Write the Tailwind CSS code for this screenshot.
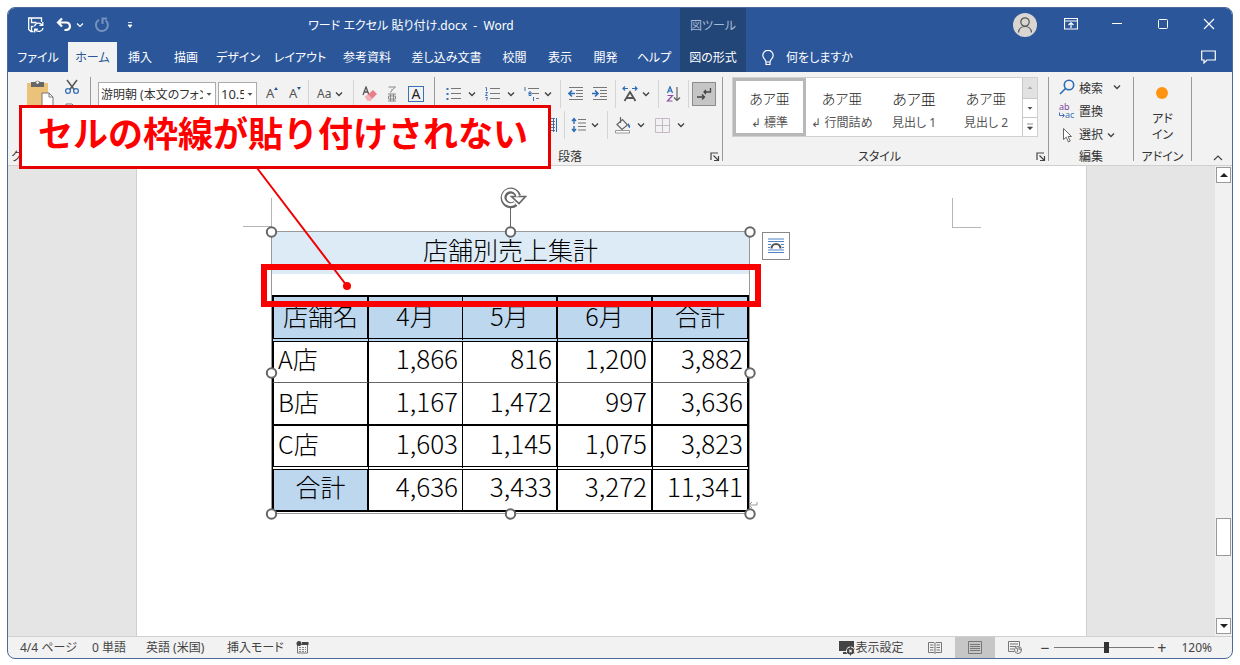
<!DOCTYPE html>
<html lang="ja">
<head>
<meta charset="utf-8">
<meta name="viewport" content="width=device-width, initial-scale=1">
<title>ワード エクセル 貼り付け.docx - Word</title>
<script src="https://cdn.jsdelivr.net/npm/@tailwindcss/browser@4"></script>
</head>
<body class="bg-white font-['Noto_Sans','Noto_Sans_CJK_JP',sans-serif] text-xs text-[#333] [font-feature-settings:'palt']">
<svg class="hidden">
  <symbol id="chev" viewBox="0 0 8 8"><path d="M1 2.5 4 5.5 7 2.5" fill="none" stroke="#444" stroke-width="1.4"/></symbol>
  <symbol id="tri" viewBox="0 0 8 8"><path d="M1.5 3h5L4 5.8z" fill="#555"/></symbol>
  <symbol id="launch" viewBox="0 0 10 10"><path d="M1 8V1h7M3.5 3.5 8 8M8.5 4v4.5H4" fill="none" stroke="#444" stroke-width="1.2"/></symbol>
</svg>
<div class="h-screen min-h-[600px] p-[7px] pb-[6px]">
<div class="relative flex h-full flex-col overflow-hidden rounded-lg border border-[#4a6a9c] bg-[#f2f2f2]">

  <!-- Title bar and tabs -->
  <header class="shrink-0 bg-[#2b579a] text-white">
    <div class="flex h-[34px]">
      <div class="flex w-[134px] shrink-0 items-center pl-5">
        <button aria-label="上書き保存"><svg class="h-4 w-4" viewBox="0 0 16 16" fill="none" stroke="#fff" stroke-width="1.3"><path d="M5.500 14.500H3L.7 12.500V1h12.800v4M3.500 1v4.500h5M3.500 14V9.500h2"/><path d="M6.500 9.300a4.200 4.200 0 0 1 7.600-1.300M14.800 5v3.400h-3.400M15 11a4.200 4.200 0 0 1-7.600 1.600M6.700 15.500v-3.300h3.300"/></svg></button>
        <button class="ml-3 flex items-center gap-1" aria-label="元に戻す"><svg class="h-4 w-4" viewBox="0 0 16 16" fill="none" stroke="#fff" stroke-width="2.200"><path d="M6 1.500 2 5.500l4 4M2.500 5.500H10c5 0 5.500 7.500 0 7.500H8.500"/></svg><svg class="h-2 w-2" viewBox="0 0 8 8"><path d="M1 2.500 4 5.500 7 2.500" fill="none" stroke="#fff" stroke-width="1.200"/></svg></button>
        <button class="ml-2.5 opacity-35" aria-label="繰り返し"><svg class="h-4 w-4" viewBox="0 0 16 16" fill="none" stroke="#fff" stroke-width="2"><path d="M5 2.800a6 6 0 1 0 6.500.5M7.500 1.500H13M8.500 1v6" /></svg></button>
        <button class="ml-4" aria-label="クイック アクセス"><svg class="h-2 w-2" viewBox="0 0 8 8"><path d="M2 1.500h4M2 4h4L4 6.500z" fill="#fff" stroke="#fff" stroke-width=".8"/></svg></button>
      </div>
      <div class="flex w-[538px] shrink-0 items-center justify-center pt-0.5 whitespace-pre">ワード エクセル 貼り付け.docx  -  Word</div>
      <div class="flex w-[66px] shrink-0 items-center justify-center bg-[#234679] pt-0.5 text-[#a8b9d4]">図ツール</div>
      <div class="flex flex-1 justify-end">
        <button class="grid w-[46px] place-items-center" aria-label="アカウント"><svg class="h-6 w-6" viewBox="0 0 24 24"><circle cx="12" cy="12" r="12" fill="#d8d5d2"/><g fill="none" stroke="#555" stroke-width="1.200"><circle cx="12" cy="9" r="4.200"/><path d="M5.500 19.500c.5-8 12.500-8 13 0"/></g></svg></button>
        <button class="grid w-[46px] place-items-center pb-0.5" aria-label="リボンの表示オプション"><svg class="h-3 w-3.5" viewBox="0 0 14 12" fill="none" stroke="#fff"><path d="M.5.500h13v10.500H.5zM.5 3h13M7 10V5M4.500 7 7 4.700 9.500 7" stroke-width="1.200"/></svg></button>
        <button class="grid w-[46px] place-items-center pb-0.5" aria-label="最小化"><svg class="h-3 w-3" viewBox="0 0 12 12" stroke="#fff"><path d="M1 5.500h10"/></svg></button>
        <button class="grid w-[46px] place-items-center pb-0.5" aria-label="最大化"><svg class="h-3 w-3" viewBox="0 0 12 12" fill="none" stroke="#fff"><rect x="1.500" y="1.500" width="9" height="9" rx="1"/></svg></button>
        <button class="grid w-[46px] place-items-center pb-0.5" aria-label="閉じる"><svg class="h-3 w-3" viewBox="0 0 12 12" stroke="#fff" stroke-width="1.200"><path d="m1 1 10 10M11 1 1 11"/></svg></button>
      </div>
    </div>
    <nav class="flex h-[30px] whitespace-nowrap">
      <button class="w-[60px] shrink-0 pt-0.5">ファイル</button>
      <button class="w-[49px] shrink-0 bg-[#f2f2f2] pt-0.5 text-[#2b579a]">ホーム</button>
      <button class="w-[46px] shrink-0 pt-0.5">挿入</button>
      <button class="w-[46px] shrink-0 pt-0.5">描画</button>
      <button class="w-[58px] shrink-0 pt-0.5">デザイン</button>
      <button class="w-[66px] shrink-0 pt-0.5">レイアウト</button>
      <button class="w-[68px] shrink-0 pt-0.5">参考資料</button>
      <button class="w-[91px] shrink-0 pt-0.5">差し込み文書</button>
      <button class="w-[45px] shrink-0 pt-0.5">校閲</button>
      <button class="w-[46px] shrink-0 pt-0.5">表示</button>
      <button class="w-[45px] shrink-0 pt-0.5">開発</button>
      <button class="w-[52px] shrink-0 pt-0.5">ヘルプ</button>
      <button class="w-[66px] shrink-0 bg-[#234679] pt-0.5">図の形式</button>
      <button class="ml-4 flex shrink-0 items-center gap-3 pt-0.5"><svg class="h-4 w-3" viewBox="0 0 12 16" fill="none" stroke="#fff" stroke-width="1.200"><path d="M4 12c0-2.500-3.200-3.500-3.200-6.500a5.200 5.200 0 0 1 10.400 0C11.200 8.500 8 9.500 8 12zM4 12v2.500h4V12"/></svg>何をしますか</button>
      <button class="mr-4 ml-auto" aria-label="コメント"><svg class="h-3.5 w-[15px]" viewBox="0 0 15 14" fill="none" stroke="#fff" stroke-width="1.200"><path d="M.7 1h13.600v9H6l-3 3v-3H.7z"/></svg></button>
    </nav>
  </header>

  <!-- Ribbon -->
  <div class="flex h-[94px] shrink-0 border-b border-[#d0d0d0] py-1 pt-[5px]">
    <section class="flex w-[83px] shrink-0 flex-col border-r border-[#999]">
      <div class="flex gap-2.5 pl-[18px]">
        <svg class="mt-0.5 h-8 w-7" viewBox="0 0 28 32"><rect x="1" y="4" width="21" height="27" fill="#ebc279"/><path d="M5 3h4a3 3 0 0 1 5 0h4v5H5z" fill="#666"/><circle cx="11.500" cy="3.500" r="1.300" fill="#fff"/><path d="M16 14h7l4 4v12H16z" fill="#fff" stroke="#777"/><path d="M23 14v4h4" fill="none" stroke="#777"/></svg>
        <div class="flex flex-col items-center gap-2 pt-0.5">
          <svg class="h-4 w-4" viewBox="0 0 16 16" fill="none"><path d="m3 1 7.500 10M13 1 5.500 11" stroke="#555" stroke-width="1.500"/><circle cx="4" cy="12" r="2.400" stroke="#3a72b5" stroke-width="1.300"/><circle cx="12" cy="12" r="2.400" stroke="#3a72b5" stroke-width="1.300"/></svg>
          <svg class="h-4 w-4" viewBox="0 0 16 16" fill="#fff" stroke="#777"><path d="M2 1h6l2 2v9H2zM6 5h6l2 2v8H6z"/></svg>
        </div>
      </div>
      <div class="mt-auto -mb-1 pl-[3px] leading-4">クリップボード</div>
    </section>

    <section class="w-[344px] shrink-0 border-r border-[#999]" aria-label="フォント">
      <div class="flex h-[34px] items-center pl-[7px]">
        <div class="flex h-6 w-[118px] items-center border border-[#ababab] bg-white">
          <input class="h-5 w-[104px] pl-0.5 outline-none" aria-label="フォント名" value="游明朝 (本文のフォント)">
          <button class="grid flex-1 place-items-center" aria-label="フォント一覧"><svg class="h-2 w-2"><use href="#tri"/></svg></button>
        </div>
        <div class="ml-0.5 flex h-6 w-[39px] items-center border border-[#ababab] bg-white">
          <input class="h-5 w-[25px] pl-0.5 text-[13px] outline-none" aria-label="フォント サイズ" value="10.5">
          <button class="grid flex-1 place-items-center" aria-label="サイズ一覧"><svg class="h-2 w-2"><use href="#tri"/></svg></button>
        </div>
        <button class="ml-[9px] flex w-[15px] text-[13px] text-[#555]" aria-label="フォントの拡大">A<svg class="mt-0.5 h-1 w-1" viewBox="0 0 4 4"><path d="m0 3 2-3 2 3z" fill="#2b579a"/></svg></button>
        <button class="ml-2 flex w-[15px] text-[13px] text-[#555]" aria-label="フォントの縮小">A<svg class="mt-0.5 h-1 w-1" viewBox="0 0 4 4"><path d="m0 0 2 3 2-3z" fill="#2b579a"/></svg></button>
        <div class="ml-1 h-7 border-l border-[#d5d5d5]"></div>
        <button class="ml-2 flex w-[26px] items-center justify-between text-[#555]">Aa<svg class="h-2 w-2 shrink-0"><use href="#chev"/></svg></button>
        <div class="ml-2.5 h-7 border-l border-[#d5d5d5]"></div>
        <button class="ml-2 w-4" aria-label="書式のクリア"><svg class="h-4 w-4" viewBox="0 0 16 16"><path d="M1 9 4 1l3 8M2 6h4" fill="none" stroke="#555" stroke-width="1.300"/><path d="m3 11 8-7 4 4-7 7H6z" fill="#e8808c"/><path d="m3 11 3-2.600 4.500 4.400L8 15H6z" fill="#f3b3ba"/></svg></button>
        <button class="ml-1.5 flex w-4 flex-col items-center" aria-label="ルビ"><svg class="h-4 w-3" viewBox="0 0 12 16" fill="none" stroke="#888"><path d="M2.500 1h7L6.500 3.500M6 3v2L4 6.500M2 8h8M2 15h8M4.500 8v7M7.500 8v7M2.500 10h7v3h-7z"/></svg></button>
        <button class="ml-2 grid h-4 w-4 place-items-center border border-[#3a72b5] text-sm leading-none text-[#222]">A</button>
      </div>
    </section>

    <section class="flex w-[288px] shrink-0 flex-col border-r border-[#999]">
      <div class="flex h-[34px] items-center pl-[11px]">
        <button class="flex w-[30px] items-center justify-between" aria-label="箇条書き"><svg class="h-4 w-4" viewBox="0 0 16 16"><path d="M5 2.500h10M5 7.500h10M5 12.500h10" stroke="#777"/><path d="M.5 2h2v2h-2zM.5 7h2v2h-2zM.5 12h2v2h-2z" fill="#3a72b5"/></svg><svg class="h-2 w-2"><use href="#chev"/></svg></button>
        <button class="ml-[9px] flex w-[30px] items-center justify-between" aria-label="段落番号"><svg class="h-4 w-4" viewBox="0 0 16 16" fill="none"><path d="M5 2.500h10M5 7.500h10M5 12.500h10" stroke="#777"/><path d="M.5 1.500h1V5M.5 6.500h2L.5 9.500h2M.5 11.500h2l-1 3" stroke="#3a72b5"/></svg><svg class="h-2 w-2"><use href="#chev"/></svg></button>
        <button class="ml-[9px] flex w-[28px] items-center justify-between" aria-label="アウトライン"><svg class="h-4 w-4" viewBox="0 0 16 16" fill="none"><path d="M4 2.500h11M8 7.500h7M12 12.500h3" stroke="#777"/><path d="M1 1v4M5 6v3.500h2V6zM5 7.500h2M9.500 11v4" stroke="#3a72b5"/></svg><svg class="h-2 w-2"><use href="#chev"/></svg></button>
        <div class="ml-2 h-7 border-l border-[#d5d5d5]"></div>
        <button class="ml-[7px]" aria-label="インデントを減らす"><svg class="h-4 w-4" viewBox="0 0 16 16" fill="none"><path d="M1 1.500h14M8 4.500h7M8 7.500h7M8 10.500h7M1 13.500h14" stroke="#777"/><path d="M7 7.500H1.500M4 4.500l-3 3 3 3" stroke="#2b6cb5" stroke-width="1.600"/></svg></button>
        <button class="ml-2" aria-label="インデントを増やす"><svg class="h-4 w-4" viewBox="0 0 16 16" fill="none"><path d="M1 1.500h14M8 4.500h7M8 7.500h7M8 10.500h7M1 13.500h14" stroke="#777"/><path d="M0 7.500h5.500M3 4.500l3 3-3 3" stroke="#2b6cb5" stroke-width="1.600"/></svg></button>
        <div class="ml-[7px] h-7 border-l border-[#d5d5d5]"></div>
        <button class="ml-1.5 flex w-[28px] items-center justify-between" aria-label="拡張書式"><svg class="h-4 w-4" viewBox="0 0 16 16" fill="none"><path d="m2.500 15 5.500-9 5.500 9M4.500 12h7" stroke="#555" stroke-width="1.800"/><path d="M6 2.500H1M3 .5l-2 2 2 2M10 2.500h5M13 .5l2 2-2 2" stroke="#2b6cb5" stroke-width="1.200"/></svg><svg class="h-2 w-2"><use href="#chev"/></svg></button>
        <div class="ml-2 h-7 border-l border-[#d5d5d5]"></div>
        <button class="ml-[7px]" aria-label="並べ替え"><svg class="h-4 w-4" viewBox="0 0 16 16" fill="none"><path d="M1.500 7 4 .7 6.500 7M2.500 5h3" stroke="#2b6cb5" stroke-width="1.200"/><path d="M1.500 9.500h5L1.500 15h5" stroke="#8a4fa8" stroke-width="1.200"/><path d="M11 1v13M8 11.500l3 3 3-3" stroke="#555" stroke-width="1.100"/></svg></button>
        <div class="ml-1.5 h-7 border-l border-[#d5d5d5]"></div>
        <button class="ml-[3px] grid h-6 w-6 place-items-center border border-[#8c8c8c] bg-[#c5c5c5]" aria-label="編集記号の表示"><svg class="h-4 w-4" viewBox="0 0 16 16" fill="none" stroke="#444" stroke-width="1.300"><path d="M14.500 2v4H8M10 4 8 6l2 2M1 11h7M6 8.500 8.500 11 6 13.500"/></svg></button>
      </div>
      <div class="flex h-7 items-center pl-[110px]">
        <button aria-label="均等割り付け"><svg class="h-4 w-3" viewBox="0 0 12 16" fill="none"><path d="M1 1.500h9M1 4.500h9M1 7.500h9M1 10.500h9M1 13.500h9" stroke="#777"/><path d="M8.500 1v14M11.500 1v14" stroke="#2b6cb5"/></svg></button>
        <div class="ml-[7px] h-7 border-l border-[#d5d5d5]"></div>
        <button class="ml-1.5 flex w-[28px] items-center justify-between" aria-label="行間"><svg class="h-4 w-4" viewBox="0 0 16 16" fill="none"><path d="M7 2.500h8M7 6h8M7 9.500h8M7 13h8" stroke="#777"/><path d="M3 2v5M1 4l2-2.500L5 4M3 9v5M1 12l2 2.500L5 12" stroke="#2b6cb5" stroke-width="1.400"/></svg><svg class="h-2 w-2"><use href="#chev"/></svg></button>
        <div class="ml-2 h-7 border-l border-[#d5d5d5]"></div>
        <button class="ml-1.5 flex w-[31px] items-center justify-between" aria-label="塗りつぶし"><svg class="h-[18px] w-[18px]" viewBox="0 0 18 18" fill="none"><path d="m3 8.500 5.500-5 5 5.500L8 13.500zM6.500 1v6" stroke="#666" stroke-width="1.200"/><path d="M14 7c3 3 2 5 1.500 5S13.500 10 14 7z" fill="#2b6cb5"/><path d="M1.500 14.500h14v2.500h-14z" fill="#fff" stroke="#999"/></svg><svg class="h-2 w-2"><use href="#chev"/></svg></button>
        <button class="ml-2.5 flex w-[30px] items-center justify-between" aria-label="罫線"><svg class="h-[15px] w-[15px]" viewBox="0 0 15 15" fill="none" stroke="#c4b9c4"><path d="M.5.500h14v14H.5zM7.500 0v15M0 7.500h15"/></svg><svg class="h-2 w-2"><use href="#chev"/></svg></button>
      </div>
      <div class="mt-auto -mb-1 flex items-center pr-0.5 pl-[123px] leading-4"><span>段落</span><button class="ml-auto" aria-label="段落の設定"><svg class="h-2.5 w-2.5"><use href="#launch"/></svg></button></div>
    </section>

    <section class="flex w-[326px] shrink-0 flex-col border-r border-[#999] pl-[9px]">
      <div class="flex h-[60px] w-[306px] border border-[#d0d0d0] bg-white text-center text-[#555]">
        <button class="flex w-[73px] flex-col items-center border-3 border-[#b8b8b8] pt-2"><span class="text-sm font-light text-[#222]">あア亜</span><span class="mt-1.5">↲ 標準</span></button>
        <button class="flex w-[72px] flex-col items-center pt-[11px] whitespace-nowrap"><span class="text-sm font-light text-[#222]">あア亜</span><span class="mt-1.5">↲ 行間詰め</span></button>
        <button class="flex w-[72px] flex-col items-center pt-[11px]"><span class="text-[15px] leading-5 font-light text-[#222]">あア亜</span><span class="mt-1.5">見出し 1</span></button>
        <button class="flex w-[72px] flex-col items-center pt-[11px]"><span class="text-sm font-light text-[#222]">あア亜</span><span class="mt-1.5">見出し 2</span></button>
        <div class="flex flex-1 flex-col border-l border-[#c8c8c8]">
          <button class="grid h-5 place-items-center bg-[#e2e2e2]" aria-label="前の行"><svg class="h-2 w-2 rotate-180 opacity-40"><use href="#tri"/></svg></button>
          <button class="grid h-5 place-items-center border-y border-[#c8c8c8]" aria-label="次の行"><svg class="h-2 w-2"><use href="#tri"/></svg></button>
          <button class="grid flex-1 place-items-center" aria-label="その他"><svg class="h-2 w-2" viewBox="0 0 8 8"><path d="M1 1h6M1.500 4h5L4 6.800z" fill="#444" stroke="#444" stroke-width=".6"/></svg></button>
        </div>
      </div>
      <div class="mt-auto -mb-1 flex items-center pr-0.5 pl-[126px] leading-4"><span>スタイル</span><button class="ml-auto" aria-label="スタイルの設定"><svg class="h-2.5 w-2.5"><use href="#launch"/></svg></button></div>
    </section>

    <section class="flex w-[85px] shrink-0 flex-col border-r border-[#999] pl-[10px]">
      <button class="flex h-[23px] items-center gap-1 pb-1"><svg class="h-4 w-4" viewBox="0 0 16 16" fill="none" stroke="#2b6cb5" stroke-width="1.600"><circle cx="10" cy="6" r="4.700"/><path d="M6.500 9.500 1 15"/></svg><span class="pt-1">検索</span><svg class="ml-1.5 h-2 w-2"><use href="#chev"/></svg></button>
      <button class="flex h-[23px] items-center gap-1"><svg class="h-4 w-4 overflow-visible" viewBox="0 0 16 16" font-size="9"><text x="0" y="6" fill="#7d4a9e">ab</text><text x="6" y="14" fill="#3a72b5">ac</text><path d="M.5 8.500v3H5M3.500 9.500l2 2-2 2" fill="none" stroke="#3a72b5"/></svg>置換</button>
      <button class="flex h-[23px] items-center gap-1"><svg class="h-4 w-4" viewBox="0 0 16 16"><path d="M4.500 1.500v11l2.700-2.300L9.500 15l1.800-1-2.200-4.500h3.400z" fill="#fff" stroke="#666"/></svg>選択<svg class="h-2 w-2"><use href="#chev"/></svg></button>
      <div class="mt-auto -mb-1 pl-5 leading-4">編集</div>
    </section>
    <section class="flex w-[58px] shrink-0 flex-col items-center border-r border-[#999]">
      <button class="flex flex-col items-center pt-2.5"><span class="h-3 w-3 rounded-full bg-[#ff9412]"></span><span class="mt-3 leading-4">アド<br>イン</span></button>
      <div class="mt-auto -mb-1 leading-4">アドイン</div>
    </section>
    <button class="mt-auto mr-[9px] -mb-0.5 ml-auto" aria-label="リボンを折りたたむ"><svg class="h-2.5 w-2.5" viewBox="0 0 10 10"><path d="M1 7 5 3l4 4" fill="none" stroke="#444" stroke-width="1.200"/></svg></button>
  </div>

  <!-- Document canvas -->
  <div class="flex min-h-0 flex-1 bg-[#e5e5e5]">
    <main class="flex min-w-0 flex-1 justify-center overflow-hidden">
      <div class="relative w-[951px] shrink-0 border-x border-[#cfcfcf] bg-white pt-[65px] pl-[134px]">
        <div class="absolute top-8 left-[106px] h-[29px] w-[29px] border-r border-b border-[#b5b5b5]"></div>
        <div class="absolute top-8 left-[815px] h-[30px] w-[29px] border-b border-l border-[#b5b5b5]"></div>
        <div class="relative w-[479px] border border-[#999] pb-px">
          <table class="w-full table-fixed border-separate border-spacing-0 font-['Noto_Sans_CJK_JP',sans-serif] text-[25px] leading-8 font-light text-black [font-feature-settings:normal]">
            <colgroup><col class="w-[97px]"><col class="w-[94px]"><col class="w-[95px]"><col class="w-[95px]"><col class="w-[96px]"></colgroup>
            <tbody>
              <tr class="h-[42px]"><td colspan="5" class="bg-[#ddebf7] p-0 pb-2 text-center">店舗別売上集計</td></tr>
              <tr class="h-[21px]"><td colspan="5" class="p-0"></td></tr>
              <tr class="h-[47px] bg-[#bdd7ee]">
                <th class="border-2 border-b-4 border-black p-0 pb-1.5 font-light [border-bottom-style:double]">店舗名</th>
                <th class="border-t-2 border-r border-b-4 border-black p-0 pb-1.5 font-light [border-bottom-style:double]">4月</th>
                <th class="border-t-2 border-r-2 border-b-4 border-black p-0 pb-1.5 font-light [border-bottom-style:double]">5月</th>
                <th class="border-t-2 border-r-2 border-b-4 border-black p-0 pb-1.5 font-light [border-bottom-style:double]">6月</th>
                <th class="border-t-2 border-r-2 border-b-4 border-black p-0 pb-1.5 font-light [border-bottom-style:double]">合計</th>
              </tr>
              <tr class="h-[41px] text-right [&>td+td]:text-[26px]">
                <td class="border-x-2 border-b border-black border-b-[#666] p-0 pb-2 pl-1 text-left">A店</td>
                <td class="border-r border-b border-black border-b-[#666] p-0 pr-1 pb-2">1,866</td>
                <td class="border-r-2 border-b border-black border-b-[#666] p-0 pr-1 pb-2">816</td>
                <td class="border-r-2 border-b border-black border-b-[#666] p-0 pr-1 pb-2">1,200</td>
                <td class="border-r-2 border-b border-black border-b-[#666] p-0 pr-1 pb-2">3,882</td>
              </tr>
              <tr class="h-[43px] text-right [&>td+td]:text-[26px]">
                <td class="border-x-2 border-b-2 border-black p-0 pb-1.5 pl-1 text-left">B店</td>
                <td class="border-r border-b-2 border-black p-0 pr-1 pb-1.5">1,167</td>
                <td class="border-r-2 border-b-2 border-black p-0 pr-1 pb-1.5">1,472</td>
                <td class="border-r-2 border-b-2 border-black p-0 pr-1 pb-1.5">997</td>
                <td class="border-r-2 border-b-2 border-black p-0 pr-1 pb-1.5">3,636</td>
              </tr>
              <tr class="h-[44px] text-right [&>td+td]:text-[26px]">
                <td class="border-x-2 border-b-4 border-black p-0 pb-1.5 pl-1 text-left [border-bottom-style:double]">C店</td>
                <td class="border-r border-b-4 border-black p-0 pr-1 pb-1.5 [border-bottom-style:double]">1,603</td>
                <td class="border-r-2 border-b-4 border-black p-0 pr-1 pb-1.5 [border-bottom-style:double]">1,145</td>
                <td class="border-r-2 border-b-4 border-black p-0 pr-1 pb-1.5 [border-bottom-style:double]">1,075</td>
                <td class="border-r-2 border-b-4 border-black p-0 pr-1 pb-1.5 [border-bottom-style:double]">3,823</td>
              </tr>
              <tr class="h-[42px] text-right [&>td]:text-[26px]">
                <th class="border-x-2 border-b-2 border-black bg-[#bdd7ee] p-0 pb-2 text-center font-light">合計</th>
                <td class="border-r border-b-2 border-black p-0 pr-1 pb-2">4,636</td>
                <td class="border-r-2 border-b-2 border-black p-0 pr-1 pb-2">3,433</td>
                <td class="border-r-2 border-b-2 border-black p-0 pr-1 pb-2">3,272</td>
                <td class="border-r-2 border-b-2 border-black p-0 pr-1 pb-2">11,341</td>
              </tr>
            </tbody>
          </table>
          <!-- Selection handles -->
          <svg class="absolute -top-[46px] -left-[7px] h-[336px] w-[500px]" viewBox="0 0 500 336" fill="none" stroke="#666">
            <path d="M245.500 22v20"/>
            <path d="M250.500 17.600a7.300 7.300 0 1 1 2.500-7.600" stroke-width="6"/>
            <path d="M246.500 10.500h14L254 17.500z" fill="#fff" stroke-width="1.600"/>
            <path d="M250 17a7.300 7.300 0 1 1 2.700-6.500" stroke="#fff" stroke-width="2.600"/>
            <path d="M492 316v3h-8M487 316l-3 3 3 3" stroke="#999"/>
            <g fill="#fff" stroke-width="2"><circle cx="6.500" cy="46" r="4.700"/><circle cx="245.500" cy="46" r="4.700"/><circle cx="485" cy="46" r="4.700"/><circle cx="6.500" cy="187" r="4.700"/><circle cx="485" cy="187" r="4.700"/><circle cx="6.500" cy="328" r="4.700"/><circle cx="245.500" cy="328" r="4.700"/><circle cx="485" cy="328" r="4.700"/></g>
          </svg>
          <button class="absolute top-0 left-[490px] grid h-7 w-7 place-items-center border border-[#888] bg-white" aria-label="レイアウト オプション"><svg class="h-4 w-4" viewBox="0 0 16 16" fill="none"><path d="M0 1h16M0 3.500h16M0 6.500h3M13 6.500h3M0 9.500h2M14 9.500h2M0 12h16M0 14.500h16" stroke="#4f83c4"/><path d="M3.500 10.500a4.500 4.500 0 0 1 9 0" stroke="#555" stroke-width="2.200"/></svg></button>
          <!-- Highlighted border area -->
          <div class="absolute top-8 -left-[11px] h-[43px] w-[500px] border-6 border-[#fb0000]"></div>
        </div>
        <svg class="absolute top-0 left-[118px] h-[126px] w-[98px]" viewBox="0 0 98 126"><path d="M2 2 92 120" stroke="#f00000" stroke-width="2"/><circle cx="92" cy="120" r="4" fill="#f00"/></svg>
      </div>
    </main>
    <div class="flex w-[17px] shrink-0 flex-col bg-[#f1f1f1] pt-px pr-px pb-0.5 pl-px">
      <button class="grid h-4 place-items-center border border-[#999] bg-white" aria-label="上へ"><svg class="h-2 w-2" viewBox="0 0 8 8"><path d="M0 6h8L4 2z" fill="#222"/></svg></button>
      <div class="grow-[337]"></div>
      <div class="h-[38px] border border-[#999] bg-white"></div>
      <div class="grow-[62]"></div>
      <button class="grid h-4 place-items-center border border-[#999] bg-white" aria-label="下へ"><svg class="h-2 w-2" viewBox="0 0 8 8"><path d="M0 2h8L4 6z" fill="#222"/></svg></button>
    </div>
  </div>

  <!-- Status bar -->
  <footer class="flex h-[22px] shrink-0 items-center border-t border-[#d0d0d0] pl-3 whitespace-nowrap text-[#444]">
    <span class="w-[72px]">4/4 ページ</span>
    <span class="w-[54px]">0 単語</span>
    <span class="w-[81px]">英語 (米国)</span>
    <span class="w-[69px]">挿入モード</span>
    <svg class="h-[13px] w-[13px]" viewBox="0 0 13 13"><path d="M1.500 3.500h10v8.500h-10z" fill="none" stroke="#777"/><circle cx="3" cy="2.500" r="2.500" fill="#444"/><path d="M6 1h6.500v3H6z" fill="#444"/><path d="M3 6.500h7M3 8.500h7M3 10.500h7" stroke="#888" stroke-dasharray="2 1"/></svg>
    <button class="ml-auto flex items-center"><svg class="h-4 w-4" viewBox="0 0 16 16"><path d="M0 1h15v10H0zM4 12h4v2H4z" fill="#444"/><circle cx="11.500" cy="11" r="4.500" fill="#f2f2f2"/><circle cx="11.500" cy="11" r="2.600" fill="none" stroke="#444" stroke-width="1.800"/><path d="M11.500 6.500v9M7.500 8.800l8 4.400M7.500 13.200l8-4.400" stroke="#444"/><circle cx="11.500" cy="11" r="1.300" fill="#f2f2f2"/></svg>表示設定</button>
    <button class="ml-3 grid h-full w-10 place-items-center" aria-label="閲覧モード"><svg class="h-3 w-3.5" viewBox="0 0 14 12" fill="none" stroke="#777"><path d="M7 1.500v10M.5.500H6l1 1 1-1h5.500v10H8l-1 1-1-1H.5zM2 3h3.500M2 5.500h3.500M2 8h3.500M8.500 3H12M8.500 5.500H12M8.500 8H12"/></svg></button>
    <button class="grid h-full w-10 place-items-center bg-[#c6c6c6]" aria-label="印刷レイアウト"><svg class="h-[13px] w-3.5" viewBox="0 0 14 13" fill="none" stroke="#777"><path d="M.5.500h13v12H.5zM2 3.500h10M2 5.500h10M2 7.500h10M2 9.500h10"/></svg></button>
    <button class="grid h-full w-10 place-items-center" aria-label="Web レイアウト"><svg class="h-[13px] w-3.5" viewBox="0 0 14 13" fill="none" stroke="#777"><path d="M11.500 5V.5H.5v10H6M2 3h8M2 5.500h6M2 8h4"/><circle cx="10" cy="9" r="3.500" fill="#f2f2f2"/><path d="M8 7l2 1-1 3M11 6v2l2 1"/></svg></button>
    <button class="ml-1 w-[11px] text-base leading-none" aria-label="縮小">−</button>
    <input type="range" aria-label="ズーム" min="0" max="100" value="52" class="ml-1 h-[13px] w-[100px] appearance-none bg-[linear-gradient(#777,#777)] bg-[length:100%_1px] bg-center bg-no-repeat [&::-webkit-slider-thumb]:h-[11px] [&::-webkit-slider-thumb]:w-[5px] [&::-webkit-slider-thumb]:appearance-none [&::-webkit-slider-thumb]:bg-[#333]">
    <button class="ml-0.5 w-[11px] text-base leading-none" aria-label="拡大">+</button>
    <button class="mr-5 ml-3.5">120%</button>
  </footer>

  <!-- Callout -->
  <div class="absolute top-[97px] left-[11px] flex h-16 w-[532px] items-center justify-center border-3 border-[#e60000] bg-white pr-1 pb-3 font-['Noto_Sans_CJK_JP',sans-serif] text-[35px] leading-none font-bold whitespace-nowrap text-[#f00] [font-feature-settings:normal]">セルの枠線が貼り付けされない</div>
</div>
</div>
</body>
</html>
